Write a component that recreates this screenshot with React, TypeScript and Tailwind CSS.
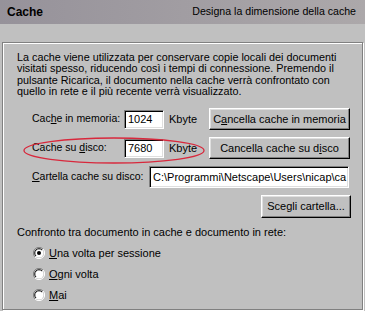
import React from "react";

const font = { fontFamily: '"Liberation Sans", Arial, sans-serif' };

const Btn = ({ children, className = "" }: { children: React.ReactNode; className?: string }) => (
  <button
    className={
      "flex shrink-0 items-center justify-center h-[22px] bg-[#c0c0c0] border border-t-white border-l-white border-r-black border-b-black shadow-[inset_-1px_-1px_0_#808080,inset_1px_1px_0_#dfdfdf] text-[11px] text-black whitespace-nowrap " +
      className
    }
  >
    {children}
  </button>
);

const Field = ({ value, className = "" }: { value: string; className?: string }) => (
  <div
    className={
      "flex shrink-0 items-center bg-white border border-t-[#808080] border-l-[#808080] border-r-white border-b-white shadow-[inset_1px_1px_0_#000,inset_-1px_-1px_0_#dfdfdf] pl-[3px] text-[11px] text-black overflow-hidden whitespace-nowrap " +
      className
    }
  >
    {value}
  </div>
);

const Radio = ({ checked, children }: { checked?: boolean; children: React.ReactNode }) => (
  <div className="flex items-center h-[21px] pl-[16px] gap-[4px]">
    <svg width="12" height="12" viewBox="0 0 12 12">
      <path d="M10 2 A5.5 5.5 0 0 0 2 10" fill="none" stroke="#808080" strokeWidth="1" />
      <path d="M2 10 A5.5 5.5 0 0 0 10 2" fill="none" stroke="#ffffff" strokeWidth="1" />
      <circle cx="6" cy="6" r="4.5" fill="#fff" />
      <path d="M9 3 A4.2 4.2 0 0 0 3 9" fill="none" stroke="#000" strokeWidth="1" />
      {checked && <circle cx="6" cy="6" r="2" fill="#000" />}
    </svg>
    <span className="text-[11px] text-black">{children}</span>
  </div>
);

export default function App() {
  return (
    <div className="relative w-[365px] h-[311px] bg-[#c0c0c0] overflow-hidden" style={font}>
      <div className="flex items-center justify-between h-[24px] pl-[7px] pr-[9px] bg-gradient-to-r from-[#96929a] to-[#aca8aa]">
        <span className="text-[12px] font-bold text-black">Cache</span>
        <span className="text-[10.6px] text-black">Designa la dimensione della cache</span>
      </div>

      <div className="pt-[18px] px-[2px]">
        <div className="h-[268px] border border-[#808080] shadow-[inset_1px_1px_0_#fff,1px_1px_0_#fff] pl-[14px] pr-[12px] text-black">
          <p className="mt-[9px] text-[10.8px] leading-[11.3px]">
            La cache viene utilizzata per conservare copie locali dei documenti visitati spesso, riducendo così i tempi
            di connessione. Premendo il pulsante Ricarica, il documento nella cache verrà confrontato con quello in
            rete e il più recente verrà visualizzato.
          </p>

          <div className="flex items-center mt-[11px] pl-[15px] h-[22px] text-[10.5px] whitespace-nowrap">
            <span className="w-[92px] shrink-0">
              Cac<u>h</u>e in memoria:
            </span>
            <Field value="1024" className="w-[40px] h-[19px]" />
            <span className="ml-[5px] w-[40px] shrink-0 text-[11px]">Kbyte</span>
            <Btn className="w-[141px]">
              C<u>a</u>ncella cache in memoria
            </Btn>
          </div>

          <div className="flex items-center mt-[7px] pl-[15px] h-[22px] text-[10.5px] whitespace-nowrap">
            <span className="w-[92px] shrink-0">
              Cache su <u>d</u>isco:
            </span>
            <Field value="7680" className="w-[40px] h-[19px]" />
            <span className="ml-[5px] w-[40px] shrink-0 text-[11px]">Kbyte</span>
            <Btn className="w-[141px]">
              Cancella cache su d<u>i</u>sco
            </Btn>
          </div>

          <div className="flex items-center mt-[7px] pl-[15px] h-[22px] text-[10.5px] whitespace-nowrap">
            <span className="w-[117px] shrink-0">
              <u>C</u>artella cache su disco:
            </span>
            <Field value="C:\Programmi\Netscape\Users\nicap\ca" className="w-[200px] h-[22px]" />
          </div>

          <div className="flex justify-end mt-[7px]">
            <Btn className="w-[90px] h-[23px] mr-[-1px]">Scegli cartella...</Btn>
          </div>

          <p className="mt-[6px] text-[11px]">Confronto tra documento in cache e documento in rete:</p>
          <div className="mt-[2px]">
            <Radio checked>
              <u>U</u>na volta per sessione
            </Radio>
            <Radio>
              <u>O</u>gni volta
            </Radio>
            <Radio>
              <u>M</u>ai
            </Radio>
          </div>
        </div>
      </div>

      <svg className="absolute left-[23px] top-[137px]" width="182" height="27" viewBox="0 0 182 27">
        <ellipse cx="91" cy="13.5" rx="90" ry="12.5" fill="none" stroke="#d8283c" strokeWidth="1.3" />
      </svg>
    </div>
  );
}
